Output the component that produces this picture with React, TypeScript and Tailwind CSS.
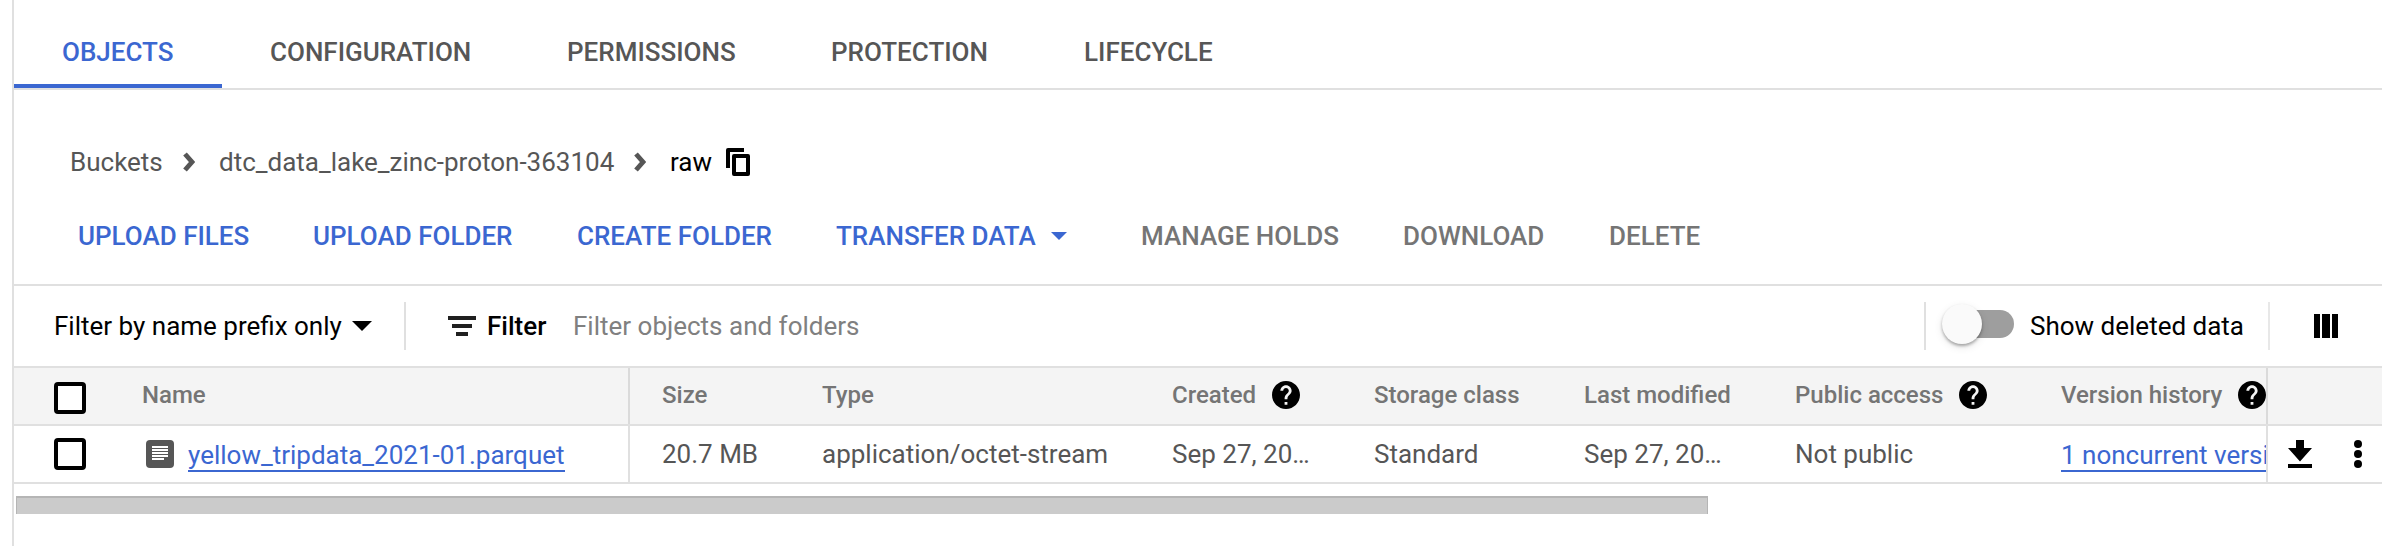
import React from "react";

const tabs = [
  { label: "OBJECTS", cls: "w-[208px] border-b-4 border-[#3b67d1] text-[#3b67d1]" },
  { label: "CONFIGURATION", cls: "w-[297px] text-[#565656]" },
  { label: "PERMISSIONS", cls: "w-[264px] text-[#565656]" },
  { label: "PROTECTION", cls: "w-[253px] text-[#565656]" },
  { label: "LIFECYCLE", cls: "w-[225px] text-[#565656]" },
];

const actions = [
  { label: "UPLOAD FILES", cls: "w-[235px] text-[#3b67d1]" },
  { label: "UPLOAD FOLDER", cls: "w-[264px] text-[#3b67d1]" },
  { label: "CREATE FOLDER", cls: "w-[259px] text-[#3b67d1]" },
  { label: "TRANSFER DATA", cls: "w-[305px] text-[#3b67d1]", menu: true },
  { label: "MANAGE HOLDS", cls: "w-[262px] text-[#757575]" },
  { label: "DOWNLOAD", cls: "w-[206px] text-[#757575]" },
  { label: "DELETE", cls: "text-[#757575]" },
];

const columns = [
  { label: "Size", value: "20.7 MB", cls: "w-[160px]" },
  { label: "Type", value: "application/octet-stream", cls: "w-[350px]" },
  { label: "Created", value: "Sep 27, 20…", cls: "w-[202px]", help: true },
  { label: "Storage class", value: "Standard", cls: "w-[210px]" },
  { label: "Last modified", value: "Sep 27, 20…", cls: "w-[211px]" },
  { label: "Public access", value: "Not public", cls: "w-[266px]", help: true },
  { label: "Version history", value: "1 noncurrent version", cls: "w-[300px]", help: true, link: true },
];

function Chevron({ className }: { className: string }) {
  return (
    <svg className={className} width="12" height="20" viewBox="0 0 12 20">
      <path d="M2 2 9 10 2 18" fill="none" stroke="#565656" strokeWidth="4.8" />
    </svg>
  );
}

function Help() {
  return (
    <svg className="mb-0.5 ml-4 shrink-0" width="28" height="28" viewBox="2 2 20 20">
      <path d="M12 2C6.48 2 2 6.48 2 12s4.48 10 10 10 10-4.48 10-10S17.52 2 12 2zm1 17h-2v-2h2v2zm2.07-7.75-.9.92C13.45 12.9 13 13.5 13 15h-2v-.5c0-1.1.45-2.1 1.17-2.83l1.24-1.26c.37-.36.59-.86.59-1.41 0-1.1-.9-2-2-2s-2 .9-2 2H8c0-2.21 1.79-4 4-4s4 1.79 4 4c0 .88-.36 1.68-.93 2.25z" />
    </svg>
  );
}

function Checkbox({ className }: { className: string }) {
  return <span role="checkbox" aria-checked="false" className={"block size-8 shrink-0 rounded-[4px] border-4 border-black bg-white " + className} />;
}

export default function App() {
  return (
    <div className="flex h-[546px] w-[2382px] overflow-hidden bg-white pl-3 font-[Roboto,sans-serif] text-[26px] leading-8 whitespace-nowrap">
      <div className="flex min-w-0 flex-1 flex-col border-l-2 border-[#e0e0e0]">
        <nav className="flex h-[90px] shrink-0 border-b-2 border-[#e0e0e0] font-medium">
          {tabs.map((t) => (
            <div key={t.label} className={"h-[88px] shrink-0 pt-9 pl-12 " + t.cls}>{t.label}</div>
          ))}
        </nav>

        <div className="mt-[56px] flex h-8 shrink-0 items-center pl-14 text-[#565656]">
          <span className="w-[113px]">Buckets</span>
          <Chevron className="mr-6" />
          <span className="w-[415px]">dtc_data_lake_zinc-proton-363104</span>
          <Chevron className="mr-6" />
          <span className="w-[56px] text-black">raw</span>
          <svg width="24" height="28" viewBox="0 0 24 28">
            <path d="M2 20V2h16" fill="none" stroke="#000" strokeWidth="4" strokeLinejoin="round" />
            <path d="M8 8h14v18H8z" fill="none" stroke="#000" strokeWidth="4" strokeLinejoin="round" />
          </svg>
        </div>

        <div className="mt-[42px] flex h-[66px] shrink-0 border-b-2 border-[#e0e0e0] pl-16 font-medium">
          {actions.map((a) => (
            <div key={a.label} className={"flex h-8 shrink-0 items-center " + a.cls}>
              {a.label}
              {a.menu && (
                <svg className="ml-[15px]" width="16" height="8" viewBox="0 0 16 8"><path d="M0 0h16L8 8z" fill="currentColor" /></svg>
              )}
            </div>
          ))}
        </div>

        <div className="flex h-[82px] shrink-0 items-center border-b-2 border-[#e0e0e0] pl-10">
          <span className="w-[298px]">Filter by name prefix only</span>
          <svg width="20" height="10" viewBox="0 0 20 10"><path d="M0 0h20L10 10z" /></svg>
          <span className="ml-8 h-12 w-0.5 bg-[#e0e0e0]" />
          <svg className="ml-[42px]" width="28" height="20" viewBox="0 0 28 20">
            <path d="M0 0h28v4H0zM4 8h20v4H4zM8 16h12v4H8z" fill="#202020" />
          </svg>
          <span className="ml-[11px] w-[86px] font-medium">Filter</span>
          <span className="flex-1 text-[#808080]">Filter objects and folders</span>
          <span className="h-12 w-0.5 bg-[#e0e0e0]" />
          <span className="mb-1 ml-5 flex h-7 w-[68px] items-center rounded-full bg-[#9e9e9e]">
            <span className="-ml-1 size-10 shrink-0 rounded-full bg-[#fafafa] shadow-[0_2px_3px_rgba(0,0,0,0.3),0_3px_8px_rgba(0,0,0,0.1)]" />
          </span>
          <span className="ml-4 w-[238px]">Show deleted data</span>
          <span className="h-12 w-0.5 bg-[#e8e8e8]" />
          <svg className="mr-11 ml-11" width="24" height="24" viewBox="0 0 24 24">
            <path d="M0 0h6v24H0zM8 0h8v24H8zM18 0h6v24h-6z" />
          </svg>
        </div>

        <div className="flex h-[58px] shrink-0 border-b-2 border-[#e0e0e0] bg-[#f4f4f4] text-2xl leading-8 font-medium text-[#757575]">
          <div className="flex w-[616px] shrink-0 items-center border-r-2 border-[#dadada] pl-10">
            <Checkbox className="mt-1 mr-14" />
            <span className="mb-0.5">Name</span>
          </div>
          <div className="flex min-w-0 flex-1 overflow-hidden pl-8">
            {columns.map((c) => (
              <div key={c.label} className={"flex shrink-0 items-center " + c.cls}>
                <span className="mb-0.5">{c.label}</span>
                {c.help && <Help />}
              </div>
            ))}
          </div>
          <div className="w-[116px] shrink-0 border-l-2 border-[#dadada]" />
        </div>

        <div className="flex h-[58px] shrink-0 border-b-2 border-[#e0e0e0] text-[#565656]">
          <div className="flex w-[616px] shrink-0 items-center border-r-2 border-[#e0e0e0] pl-10">
            <Checkbox className="mr-[60px]" />
            <svg width="28" height="28" viewBox="0 0 28 28">
              <rect width="28" height="28" rx="4" fill="#565656" />
              <path d="M6 7h16M6 10h16M6 13h16M6 16h16M6 19h12" stroke="#fff" strokeWidth="1.8" />
            </svg>
            <a className="mt-[3px] ml-3.5 h-[33px] border-b-2 border-[#3b67d1] text-[#3b67d1]">yellow_tripdata_2021-01.parquet</a>
          </div>
          <div className="flex min-w-0 flex-1 overflow-hidden pl-8">
            {columns.map((c) => (
              <div key={c.label} className={"flex shrink-0 items-center " + c.cls}>
                {c.link ? <a className="mt-[3px] h-[33px] border-b-2 border-[#3b67d1] text-[#3b67d1]">{c.value}</a> : c.value}
              </div>
            ))}
          </div>
          <div className="flex w-[116px] shrink-0 items-center border-l-2 border-[#e0e0e0] pl-5">
            <svg width="24" height="28" viewBox="0 0 24 28">
              <path d="M8 0h8v8h8L12 21.5 0 8h8zM0 24h24v4H0z" />
            </svg>
            <svg className="ml-[42px]" width="8" height="28" viewBox="0 0 8 28">
              <circle cx="4" cy="4" r="4" /><circle cx="4" cy="14" r="4" /><circle cx="4" cy="24" r="4" />
            </svg>
          </div>
        </div>

        <div className="mt-3 ml-0.5 h-[18px] w-[1692px] shrink-0 border-x border-t-2 border-[#b5b5b5] bg-[#cbcbcb]" />
      </div>
    </div>
  );
}
